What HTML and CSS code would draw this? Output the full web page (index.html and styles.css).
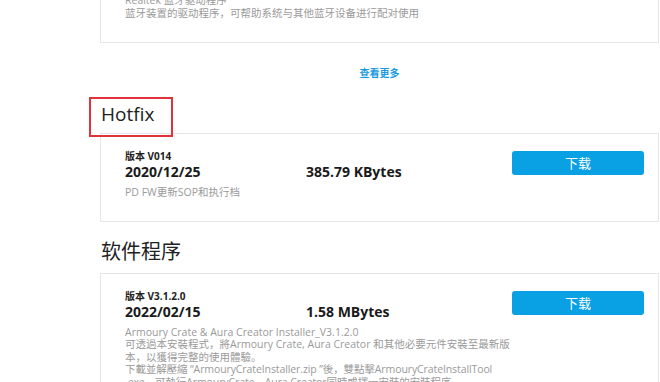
FILE: index.html
```html
<!DOCTYPE html>
<html lang="zh">
<head>
<meta charset="utf-8">
<title>Drivers</title>
<link rel="stylesheet" href="styles.css">
</head>
<body>
<main class="page">
  <section class="card card-top">
    <p class="desc">Realtek 蓝牙驱动程序</p>
    <p class="desc">蓝牙装置的驱动程序，可帮助系统与其他蓝牙设备进行配对使用</p>
  </section>
  <div class="more"><a class="more-link" href="#">查看更多</a></div>

  <h2 class="section-title title-hotfix"><span class="mark">Hotfix</span></h2>
  <section class="card card-hotfix">
    <div class="info">
      <div class="ver">版本 V014</div>
      <div class="row"><span class="date">2020/12/25</span><span class="size">385.79 KBytes</span></div>
      <p class="desc">PD FW更新SOP和执行档</p>
    </div>
    <button class="dl" type="button">下载</button>
  </section>

  <h2 class="section-title title-soft">软件程序</h2>
  <section class="card">
    <div class="info">
      <div class="ver">版本 V3.1.2.0</div>
      <div class="row"><span class="date">2022/02/15</span><span class="size">1.58 MBytes</span></div>
      <p class="desc">Armoury Crate &amp; Aura Creator Installer_V3.1.2.0</p>
      <p class="desc">可透過本安裝程式，將Armoury Crate, Aura Creator 和其他必要元件安裝至最新版本，以獲得完整的使用體驗。</p>
      <p class="desc desc-tight">下載並解壓縮 “ArmouryCrateInstaller.zip ”後，雙點擊ArmouryCrateInstallTool<wbr>.exe，可執行ArmouryCrate、Aura Creator同時或擇一安裝的安裝程序。</p>
    </div>
    <button class="dl" type="button">下载</button>
  </section>
</main>
</body>
</html>
```

FILE: styles.css
```css
*, *::before, *::after { box-sizing: border-box; }
html, body { margin: 0; padding: 0; background: #fff; }
body {
  font-family: "Open Sans", "Noto Sans CJK SC", sans-serif;
  color: #222;
  overflow: hidden;
}
.page {
  width: 559px;
  margin-left: 100px;
}
.card {
  display: flex;
  align-items: flex-start;
  justify-content: space-between;
  border: 1px solid #e6e6e6;
  padding: 15px 14px 21px 24px;
}
.card-hotfix { padding-bottom: 22px; }
.card-top {
  display: block;
  margin-top: -24px;
  padding-top: 17px;
  padding-bottom: 23px;
}
.desc {
  margin: 0;
  font-size: 10.5px;
  line-height: 12.5px;
  color: #9a9a9a;
}
.desc-tight { letter-spacing: -0.1px; }
.info { width: 386px; }
.ver {
  font-size: 10px;
  line-height: 14px;
  font-weight: 700;
  color: #222;
}
.row {
  display: flex;
  font-size: 14px;
  line-height: 18px;
  font-weight: 700;
  color: #1a1a1a;
}
.date { width: 181px; }
.row + .desc { margin-top: 5px; }
.dl {
  flex: none;
  margin-top: 2px;
  width: 132px;
  height: 24px;
  border: 0;
  border-radius: 3px;
  background: #0aa0e4;
  color: #fff;
  font-family: "Noto Sans CJK SC", sans-serif;
  font-size: 13px;
  line-height: 24px;
  padding: 0;
}
.more {
  margin-top: 21px;
  text-align: center;
  line-height: 14px;
}
.more-link {
  font-size: 10px;
  font-weight: 700;
  color: #1a9be0;
  text-decoration: none;
}
.section-title {
  margin: 0;
  padding-left: 1px;
  font-size: 19px;
  line-height: 26px;
  font-weight: 400;
  color: #222;
}
.title-hotfix { margin-top: 21px; margin-bottom: 6px; }
.title-soft { margin-top: 17px; margin-bottom: 8px; font-size: 20px; }
.mark { position: relative; display: inline-block; }
.mark::after {
  content: "";
  position: absolute;
  left: -12px;
  top: -4px;
  width: 84px;
  height: 40px;
  border: 2px solid #e0333a;
}
```
